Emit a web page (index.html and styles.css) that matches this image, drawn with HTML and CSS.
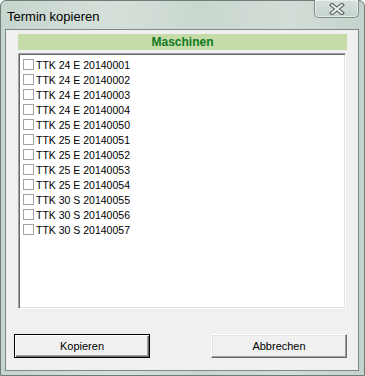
FILE: index.html
```html
<html>
	<head>
		<link rel="stylesheet" href="styles.css">
	</head>
	<body>
		<div id="window">
			<div id="titlebar">
				<span id="title">Termin kopieren</span>
				<div id="close">
					<svg width="16" height="12" viewBox="0 0 16 12">
						<path d="M3 2 L13 10 M13 2 L3 10" stroke="#4a4f52" stroke-width="4" stroke-linecap="square"/>
						<path d="M3 2 L13 10 M13 2 L3 10" stroke="#f4f6f6" stroke-width="2" stroke-linecap="square"/>
					</svg>
				</div>
			</div>

			<div id="client">
				<div id="header">Maschinen</div>
				<div id="list">
					<div class="item"><span class="box"></span>TTK 24 E 20140001</div>
					<div class="item"><span class="box"></span>TTK 24 E 20140002</div>
					<div class="item"><span class="box"></span>TTK 24 E 20140003</div>
					<div class="item"><span class="box"></span>TTK 24 E 20140004</div>
					<div class="item"><span class="box"></span>TTK 25 E 20140050</div>
					<div class="item"><span class="box"></span>TTK 25 E 20140051</div>
					<div class="item"><span class="box"></span>TTK 25 E 20140052</div>
					<div class="item"><span class="box"></span>TTK 25 E 20140053</div>
					<div class="item"><span class="box"></span>TTK 25 E 20140054</div>
					<div class="item"><span class="box"></span>TTK 30 S 20140055</div>
					<div class="item"><span class="box"></span>TTK 30 S 20140056</div>
					<div class="item"><span class="box"></span>TTK 30 S 20140057</div>
				</div>
				<div id="buttons">
					<div class="button default">Kopieren</div>
					<div class="button">Abbrechen</div>
				</div>
			</div>
		</div>
	</body>
</html>
```

FILE: styles.css
```css
body {
	margin: 0;
	width: 365px;
	height: 376px;
	overflow: hidden;
	background: #fff;
}

#window {
	width: 365px;
	height: 376px;
	box-sizing: border-box;
	border: 1px solid #6f7d78;
	border-radius: 6px 6px 0 0;
	background: linear-gradient(90deg, #c6d5cd 0%, #d6e0da 30%, #c9d7cf 55%, #d3ddd7 80%, #c3d2ca 100%);
	padding: 0 5px 5px 4px;
}

#titlebar {
	height: 28px;
	display: flex;
	justify-content: space-between;
	align-items: flex-start;
}

#title {
	font-family: "Liberation Sans", Arial, sans-serif;
	font-size: 13px;
	color: #000;
	margin-top: 8px;
	margin-left: 2px;
}

#close {
	width: 45px;
	height: 18px;
	margin-top: -1px;
	box-sizing: border-box;
	border: 1px solid #7d8d88;
	border-top: none;
	border-radius: 0 0 5px 5px;
	background: linear-gradient(#d7e0dc, #c5d3cd);
	box-shadow: inset 0 0 0 1px rgba(255,255,255,0.5);
	display: flex;
	align-items: center;
	justify-content: center;
}

#client {
	height: 342px;
	box-sizing: border-box;
	border: 1px solid #7c8a87;
	background: #f0f0f0;
	padding: 4px 11px 0 12px;
}

#header {
	height: 16px;
	background: #c5dca9;
	color: #0f7a1f;
	font-family: "Liberation Sans", Arial, sans-serif;
	font-weight: bold;
	font-size: 12px;
	line-height: 16px;
	text-align: center;
}

#list {
	margin-top: 3px;
	height: 256px;
	box-sizing: border-box;
	background: #fff;
	border-top: 1px solid #a0a0a0;
	border-left: 1px solid #a0a0a0;
	border-right: 1px solid #fff;
	border-bottom: 1px solid #fff;
	box-shadow: inset 1px 1px 0 #696969, inset -1px -1px 0 #e3e3e3;
	padding: 3px 0 0 4px;
	margin-right: 1px;
}

.item {
	height: 15px;
	display: flex;
	align-items: center;
	font-family: "Liberation Sans", Arial, sans-serif;
	font-size: 10.5px;
	color: #000;
}

.box {
	width: 11px;
	height: 11px;
	box-sizing: border-box;
	border: 1px solid #a3a3a3;
	background: #fff;
	margin-right: 2px;
}

#buttons {
	display: flex;
	justify-content: space-between;
	margin-top: 25px;
	margin-left: -4px;
}

.button {
	width: 136px;
	height: 24px;
	box-sizing: border-box;
	background: #f0f0f0;
	border-top: 1px solid #fff;
	border-left: 1px solid #fff;
	border-right: 1px solid #696969;
	border-bottom: 1px solid #696969;
	box-shadow: inset -1px -1px 0 #a0a0a0, inset 1px 1px 0 #e3e3e3;
	font-family: "Liberation Sans", Arial, sans-serif;
	font-size: 11px;
	color: #000;
	display: flex;
	align-items: center;
	justify-content: center;
}

.default {
	border: 1px solid #000;
	box-shadow: inset 1px 1px 0 #fff, inset -1px -1px 0 #696969, inset -2px -2px 0 #a0a0a0;
}
```
